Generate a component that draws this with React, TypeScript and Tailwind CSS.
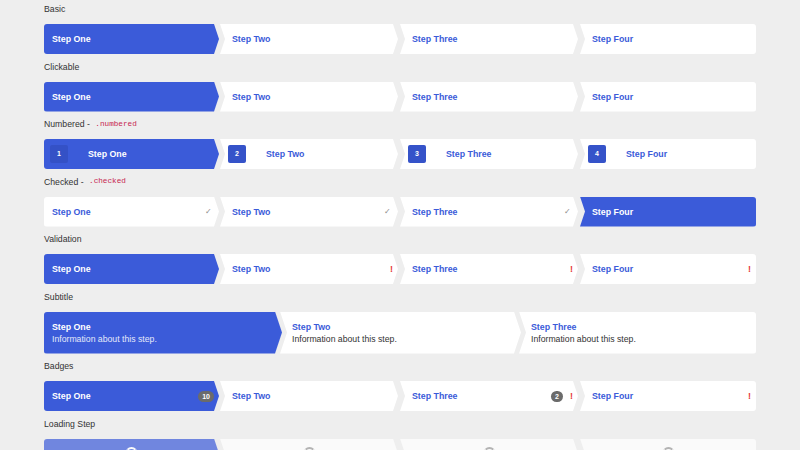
import React from 'react';
import clsx from 'clsx';

type Pos = 'first' | 'mid' | 'last';

const CLIP: Record<Pos, string> = {
  first:
    '[clip-path:polygon(0_0,calc(100%_-_5px)_0,100%_50%,calc(100%_-_5px)_100%,0_100%)] rounded-l-[3px]',
  mid: '[clip-path:polygon(0_0,calc(100%_-_5px)_0,100%_50%,calc(100%_-_5px)_100%,0_100%,5px_50%)]',
  last: '[clip-path:polygon(0_0,100%_0,100%_100%,0_100%,5px_50%)] rounded-r-[3px]',
};

const CLIP_TALL: Record<Pos, string> = {
  first:
    '[clip-path:polygon(0_0,calc(100%_-_7px)_0,100%_50%,calc(100%_-_7px)_100%,0_100%)] rounded-l-[3px]',
  mid: '[clip-path:polygon(0_0,calc(100%_-_7px)_0,100%_50%,calc(100%_-_7px)_100%,0_100%,7px_50%)]',
  last: '[clip-path:polygon(0_0,100%_0,100%_100%,0_100%,7px_50%)] rounded-r-[3px]',
};

const SHORT_W = ['w-[175px]', 'ml-[1px] w-[178px]', 'ml-[2px] w-[178px]', 'ml-[2px] w-[176px]'];
const TALL_W = ['w-[238px]', '-ml-[2px] w-[241px]', '-ml-[2px] w-[237px]'];

function posOf(i: number, n: number): Pos {
  return i === 0 ? 'first' : i === n - 1 ? 'last' : 'mid';
}

function Step({
  i,
  n,
  active,
  tall,
  padL,
  className,
  children,
}: {
  i: number;
  n: number;
  active?: boolean;
  tall?: boolean;
  padL?: string;
  className?: string;
  children?: React.ReactNode;
}) {
  const p = posOf(i, n);
  return (
    <div
      className={clsx(
        'shrink-0 min-w-0 flex items-center',
        tall ? 'h-[42px]' : 'h-[30px]',
        tall ? CLIP_TALL[p] : CLIP[p],
        tall ? TALL_W[i] : SHORT_W[i],
        active ? 'bg-[#3b5bd9] text-white' : 'bg-white text-[#3b5bd9]',
        padL ?? (p === 'first' ? 'pl-[8px]' : 'pl-[12px]'),
        className
      )}
    >
      {children}
    </div>
  );
}

function Title({ children }: { children: React.ReactNode }) {
  return <span className="font-bold text-[8.8px] leading-[12px] whitespace-nowrap">{children}</span>;
}

function Label({ children }: { children: React.ReactNode }) {
  return (
    <div className="h-[15px] flex items-center text-[8.7px] leading-[15px] text-[#333] mb-[7px] whitespace-pre">
      {children}
    </div>
  );
}

function Code({ children }: { children: React.ReactNode }) {
  return (
    <code className="font-['Liberation_Mono',monospace] text-[7.7px] leading-none text-[#c7254e] px-[3px]">
      {children}
    </code>
  );
}

const NAMES = ['Step One', 'Step Two', 'Step Three', 'Step Four'];

function Row({ children }: { children: React.ReactNode }) {
  return <div className="flex">{children}</div>;
}

function Bang() {
  return <span className="ml-auto pr-[5px] text-[#e63b3b] font-bold text-[9px] leading-[12px]">!</span>;
}

function Check() {
  return <span className="ml-auto pr-[7px] text-[#8a8a8a] text-[7.5px] leading-[12px]">✓</span>;
}

export default function App() {
  return (
    <div className="h-[450px] overflow-hidden bg-[#eeeeee] font-['Liberation_Sans',Arial,sans-serif]">
      <div className="flex flex-col gap-[5.5px] px-[44px] pt-[2px]">
        <section>
          <Label>Basic</Label>
          <Row>
            {NAMES.map((s, i) => (
              <Step key={s} i={i} n={4} active={i === 0}>
                <Title>{s}</Title>
              </Step>
            ))}
          </Row>
        </section>

        <section>
          <Label>Clickable</Label>
          <Row>
            {NAMES.map((s, i) => (
              <Step key={s} i={i} n={4} active={i === 0} className="cursor-pointer">
                <Title>{s}</Title>
              </Step>
            ))}
          </Row>
        </section>

        <section>
          <Label>
            {'Numbered - '}
            <Code>.numbered</Code>
          </Label>
          <Row>
            {NAMES.map((s, i) => (
              <Step key={s} i={i} n={4} active={i === 0} padL={i === 0 ? 'pl-[6px]' : 'pl-[8px]'}>
                <span
                  className={clsx(
                    'w-[18px] h-[18px] rounded-[2px] flex items-center justify-center text-white font-bold text-[7px] mr-[20px] shrink-0',
                    i === 0 ? 'bg-[#3451c6]' : 'bg-[#3553c9]'
                  )}
                >
                  {i + 1}
                </span>
                <Title>{s}</Title>
              </Step>
            ))}
          </Row>
        </section>

        <section>
          <Label>
            {'Checked - '}
            <Code>.checked</Code>
          </Label>
          <Row>
            {NAMES.map((s, i) => (
              <Step key={s} i={i} n={4} active={i === 3}>
                <Title>{s}</Title>
                {i < 3 && <Check />}
              </Step>
            ))}
          </Row>
        </section>

        <section>
          <Label>Validation</Label>
          <Row>
            {NAMES.map((s, i) => (
              <Step key={s} i={i} n={4} active={i === 0}>
                <Title>{s}</Title>
                {i > 0 && <Bang />}
              </Step>
            ))}
          </Row>
        </section>

        <section>
          <Label>Subtitle</Label>
          <Row>
            {NAMES.slice(0, 3).map((s, i) => (
              <Step key={s} i={i} n={3} active={i === 0} tall>
                <div className="flex flex-col">
                  <Title>{s}</Title>
                  <span
                    className={clsx(
                      'text-[8.7px] leading-[12px] whitespace-nowrap',
                      i === 0 ? 'text-[#e4e9fa]' : 'text-[#333]'
                    )}
                  >
                    Information about this step.
                  </span>
                </div>
              </Step>
            ))}
          </Row>
        </section>

        <section>
          <Label>Badges</Label>
          <Row>
            <Step i={0} n={4} active>
              <Title>Step One</Title>
              <span className="ml-auto mr-[5px] h-[11px] px-[4px] rounded-full bg-[#6b6b6b] text-white font-bold text-[7px] leading-[11px]">
                10
              </span>
            </Step>
            <Step i={1} n={4}>
              <Title>Step Two</Title>
            </Step>
            <Step i={2} n={4}>
              <Title>Step Three</Title>
              <span className="ml-auto w-[12px] h-[11px] rounded-full bg-[#6b6b6b] text-white font-bold text-[7px] leading-[11px] text-center">
                2
              </span>
              <span className="ml-[7px] pr-[5px] text-[#e63b3b] font-bold text-[9px] leading-[12px]">!</span>
            </Step>
            <Step i={3} n={4}>
              <Title>Step Four</Title>
              <Bang />
            </Step>
          </Row>
        </section>

        <section>
          <Label>Loading Step</Label>
          <Row>
            {NAMES.map((s, i) => (
              <Step key={s} i={i} n={4} active={i === 0} padL="pl-0" className="opacity-70 justify-center">
                <span
                  className={clsx(
                    'w-[13px] h-[13px] rounded-full border-2',
                    i === 0 ? 'border-[#ffffff88] border-t-white' : 'border-[#e3e3e3] border-t-[#9a9a9a]'
                  )}
                />
              </Step>
            ))}
          </Row>
        </section>
      </div>
    </div>
  );
}
